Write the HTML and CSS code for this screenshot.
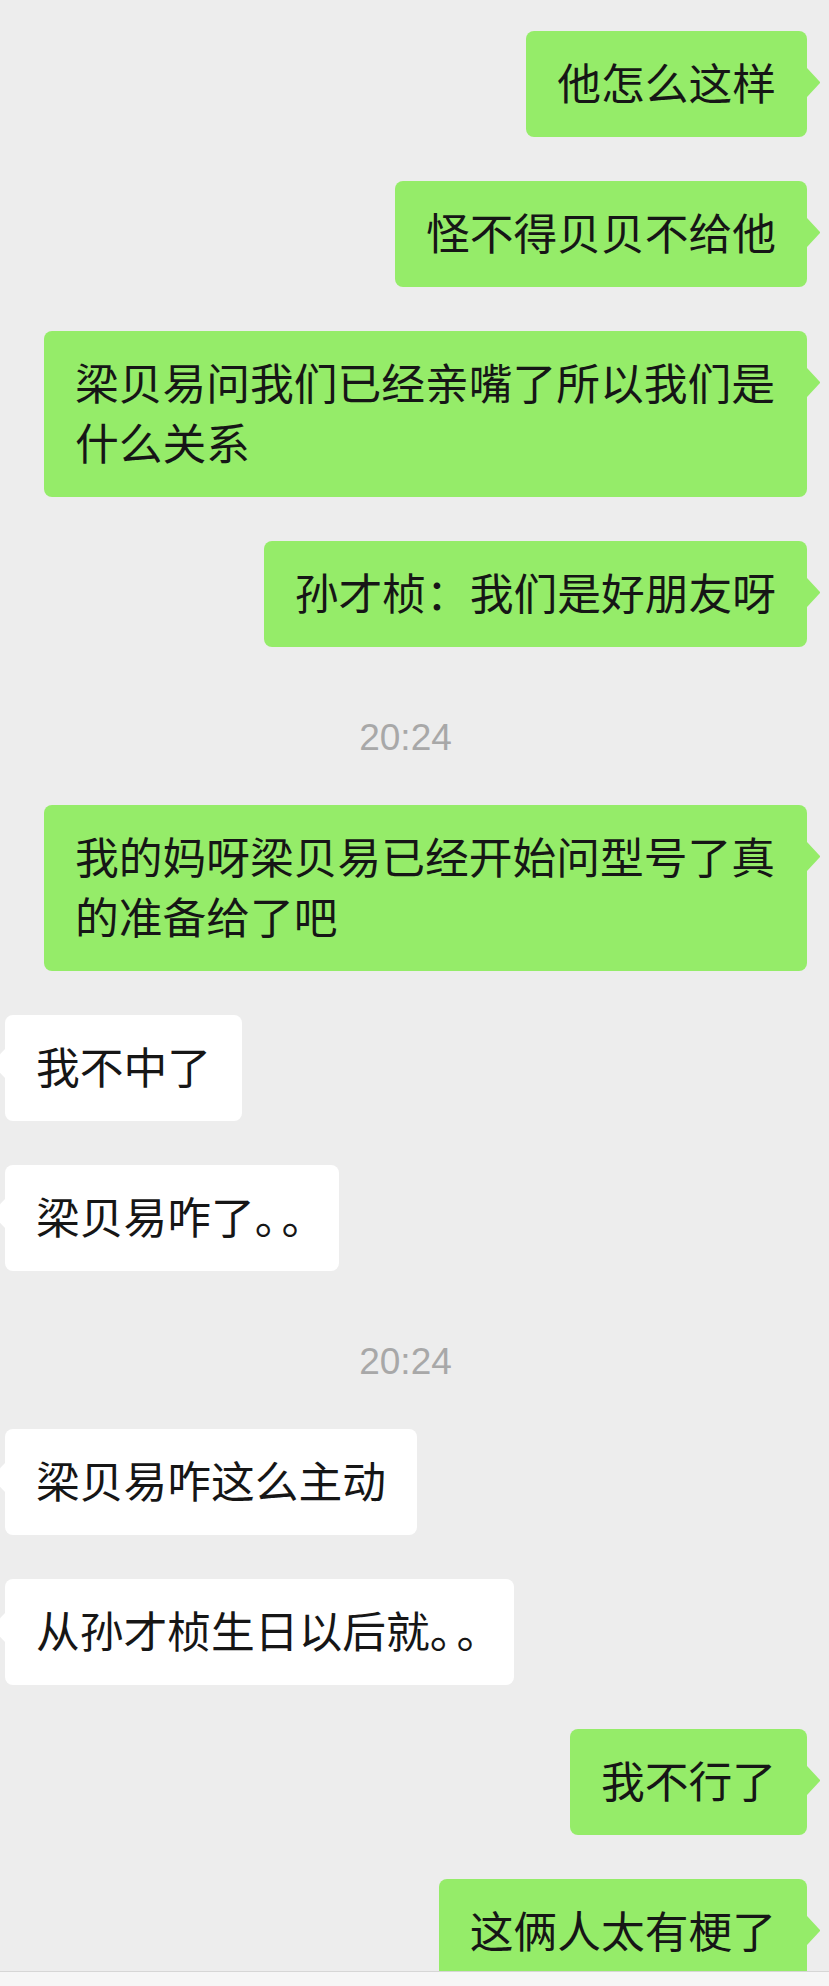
FILE: index.html
```html
<!DOCTYPE html>
<html lang="zh-CN">
<head>
<meta charset="utf-8">
<title>聊天</title>
<link rel="stylesheet" href="styles.css">
</head>
<body>
<div class="screen">
  <div class="chat">
    <div class="row out"><div class="bubble green">他怎么这样</div></div>
    <div class="row out"><div class="bubble green">怪不得贝贝不给他</div></div>
    <div class="row out"><div class="bubble green">梁贝易问我们已经亲嘴了所以我们是什么关系</div></div>
    <div class="row out"><div class="bubble green">孙才桢：我们是好朋友呀</div></div>
    <div class="time">20:24</div>
    <div class="row out"><div class="bubble green">我的妈呀梁贝易已经开始问型号了真的准备给了吧</div></div>
    <div class="row in"><div class="bubble white">我不中了</div></div>
    <div class="row in"><div class="bubble white">梁贝易咋了<span class="dots">。。</span></div></div>
    <div class="time">20:24</div>
    <div class="row in"><div class="bubble white">梁贝易咋这么主动</div></div>
    <div class="row in"><div class="bubble white">从孙才桢生日以后就<span class="dots">。。</span></div></div>
    <div class="row out"><div class="bubble green">我不行了</div></div>
    <div class="row out"><div class="bubble green">这俩人太有梗了</div></div>
  </div>
  <div class="inputbar"></div>
</div>
</body>
</html>
```

FILE: styles.css
```css
* { box-sizing: border-box; }

html, body {
  margin: 0;
  padding: 0;
  background: #ededed;
}

.screen {
  width: 829px;
  height: 1986px;
  display: flex;
  flex-direction: column;
  overflow: hidden;
}

.chat {
  height: 1971px;
  overflow: hidden;
  display: flex;
  flex-direction: column;
  gap: 44px;
  padding-top: 31px;
  flex-shrink: 0;
}

.row {
  display: flex;
  flex-shrink: 0;
}

.row.out {
  justify-content: flex-end;
  padding-right: 22px;
}

.row.in {
  justify-content: flex-start;
  padding-left: 5px;
}

.bubble {
  position: relative;
  max-width: 763px;
  padding: 20px 31px 26px;
  border-radius: 8px;
  font-family: "Noto Sans CJK SC", "Noto Sans", sans-serif;
  font-size: 43.75px;
  line-height: 60px;
  color: #161616;
  word-break: break-all;
  text-spacing-trim: space-all;
}

.bubble.green { background: #95ec69; }
.bubble.white { background: #ffffff; }

.bubble.green::after,
.bubble.white::after {
  content: "";
  position: absolute;
  top: 37px;
  width: 13px;
  height: 29px;
}

.bubble.green::after {
  right: -13px;
  background: #95ec69;
  clip-path: polygon(0 0, 100% 48%, 100% 52%, 0 100%);
}

.bubble.white::after {
  left: -13px;
  top: 34px;
  background: #ffffff;
  clip-path: polygon(100% 0, 0 48%, 0 52%, 100% 100%);
}

.dots {
  letter-spacing: -17px;
}

.time {
  flex-shrink: 0;
  text-align: center;
  padding: 28px 18px 5px 0;
  font-family: "Liberation Sans", Arial, sans-serif;
  font-size: 37px;
  line-height: 37px;
  color: #a8a8a8;
}

.inputbar {
  flex: 1;
  border-top: 1px solid #d6d6d6;
  background: #f6f6f6;
}
```
